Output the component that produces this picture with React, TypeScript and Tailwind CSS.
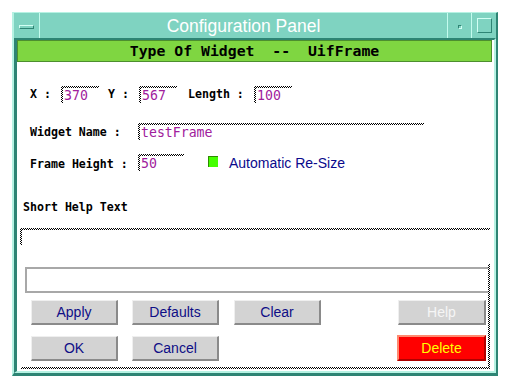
const DITHER = 'bg-[repeating-conic-gradient(#000_0_25%,#fff_0_50%)] bg-[length:2px_2px]'
const LABEL = "shrink-0 whitespace-nowrap font-['DejaVu_Sans_Mono',monospace] font-bold text-[11.6px] leading-[15px] text-black"
const BTN =
  "flex h-[25px] shrink-0 items-center justify-center border-t border-l border-[#efefef] border-r-2 border-b-2 border-r-[#8a8a8a] border-b-[#8a8a8a] bg-[#d3d3d3] font-['Liberation_Sans',Arial,sans-serif] text-[14px]"

function Field({ className, value }: { className: string; value: string }) {
  return (
    <div className={`flex shrink-0 flex-col ${className}`}>
      <div className={`h-[2px] ${DITHER}`} />
      <div className="flex">
        <div className={`h-[15px] w-[2px] ${DITHER}`} />
        <span className="pl-[1px] font-['DejaVu_Sans_Mono',monospace] text-[13.2px] leading-[15px] text-[#a0209c]">
          {value}
        </span>
      </div>
    </div>
  )
}

export default function App() {
  return (
    <div className="h-[389px] w-[520px] overflow-hidden bg-white pt-[12px]">
      {/* window */}
      <div className="ml-[12px] w-[486px] border-t border-l-2 border-[#b6f2e3] border-r-2 border-b-[3px] border-r-[#2e8474] border-b-[#2e8474] bg-[#7fd3c1]">
        {/* title bar */}
        <div className="flex h-[25px]">
          <div className="flex w-[26px] items-center justify-center border-r border-[#c4fbee]">
            <div className="mt-[2px] h-[4px] w-[15px] border-t border-l border-[#d2fff4] border-b border-r border-b-[#2e8474] border-r-[#2e8474]" />
          </div>
          <div className="flex-1 pt-[1px] text-center font-['Liberation_Sans',Arial,sans-serif] text-[17.5px] leading-[25px] text-white">
            Configuration Panel
          </div>
          <div className="flex w-[24px] items-center justify-center border-l border-[#c4fbee]">
            <div className="mt-[2px] h-[4px] w-[4px] border-t border-l border-[#2e8474] border-b border-r border-b-[#d2fff4] border-r-[#d2fff4]" />
          </div>
          <div className="flex w-[25px] items-center justify-center border-l border-[#c4fbee]">
            <div className="h-[15px] w-[15px] border-t border-l border-[#d2fff4] border-b border-r border-b-[#2e8474] border-r-[#2e8474]" />
          </div>
        </div>

        {/* client */}
        <div className="flex h-[335px] flex-col border-t-2 border-l-[3px] border-[#2e8474] border-r-2 border-b-2 border-r-[#b6f2e3] border-b-[#b6f2e3] bg-white">
          <div className="h-[22px] w-[475px] border border-[#4d8f2e] bg-[#7fd641] text-center font-['DejaVu_Sans_Mono',monospace] text-[14.8px] font-bold leading-[20px] whitespace-pre text-black">
            Type Of Widget  --  UifFrame
          </div>

          {/* position row */}
          <div className="mt-[24px] flex items-start pl-[13px]">
            <span className={`${LABEL} mt-[1px] w-[31px]`}>X :</span>
            <Field className="w-[38px]" value="370" />
            <span className={`${LABEL} mt-[1px] ml-[9px] w-[31px]`}>Y :</span>
            <Field className="w-[38px]" value="567" />
            <span className={`${LABEL} mt-[1px] ml-[11px] w-[66px]`}>Length :</span>
            <Field className="w-[38px]" value="100" />
          </div>

          <div className="mt-[20px] flex items-start pl-[13px]">
            <span className={`${LABEL} mt-[2px] w-[108px]`}>Widget Name :</span>
            <Field className="w-[286px]" value="testFrame" />
          </div>

          <div className="mt-[14px] flex items-start pl-[13px]">
            <span className={`${LABEL} mt-[3px] w-[108px]`}>Frame Height :</span>
            <Field className="w-[46px]" value="50" />
            <div className="mt-[2px] ml-[24px] h-[11px] w-[10px] shrink-0 border-t border-l border-[#2f8a00] bg-[#44ff00]" />
            <span className="mt-[1px] ml-[11px] font-['Liberation_Sans',Arial,sans-serif] text-[14px] leading-[17px] text-[#0a0a8c]">
              Automatic Re-Size
            </span>
          </div>

          <div className={`${LABEL} mt-[28px] pl-[6px]`}>Short Help Text</div>

          {/* help text field */}
          <div className="mt-[13px] ml-[3px] flex w-[470px] flex-col">
            <div className={`h-[2px] ${DITHER}`} />
            <div className={`h-[15px] w-[2px] ${DITHER}`} />
          </div>

          {/* button area */}
          <div className="mt-[19px] ml-[4px] flex w-[469px] flex-col">
            <div className="flex">
              <div className="flex-1 pt-[3px] pl-[4px]">
                <div className="h-[26px] border-2 border-r-0 border-[#a8a8a8] bg-white" />
                <div className="mt-[7px] flex pl-[6px]">
                  <div className={`${BTN} w-[87px] text-[#0e0e86]`}>Apply</div>
                  <div className={`${BTN} ml-[14px] w-[87px] text-[#0e0e86]`}>Defaults</div>
                  <div className={`${BTN} ml-[15px] w-[87px] text-[#0e0e86]`}>Clear</div>
                  <div className={`${BTN} mr-[2px] ml-auto w-[88px] text-[#f6f6f6]`}>Help</div>
                </div>
                <div className="mt-[11px] flex items-start pb-[6px] pl-[6px]">
                  <div className={`${BTN} w-[87px] text-[#0e0e86]`}>OK</div>
                  <div className={`${BTN} ml-[14px] w-[87px] text-[#0e0e86]`}>Cancel</div>
                  <div className="mr-[2px] ml-auto -mt-[1px] flex h-[26px] w-[89px] items-center justify-center border-2 border-[#ff8a70] border-r-[#b00000] border-b-[#b00000] bg-[#ff0000] font-['Liberation_Sans',Arial,sans-serif] text-[14px] text-[#ffff00]">
                    Delete
                  </div>
                </div>
              </div>
              <div className={`w-[2px] ${DITHER}`} />
            </div>
            <div className={`h-[2px] ${DITHER}`} />
          </div>
        </div>
      </div>
    </div>
  )
}
